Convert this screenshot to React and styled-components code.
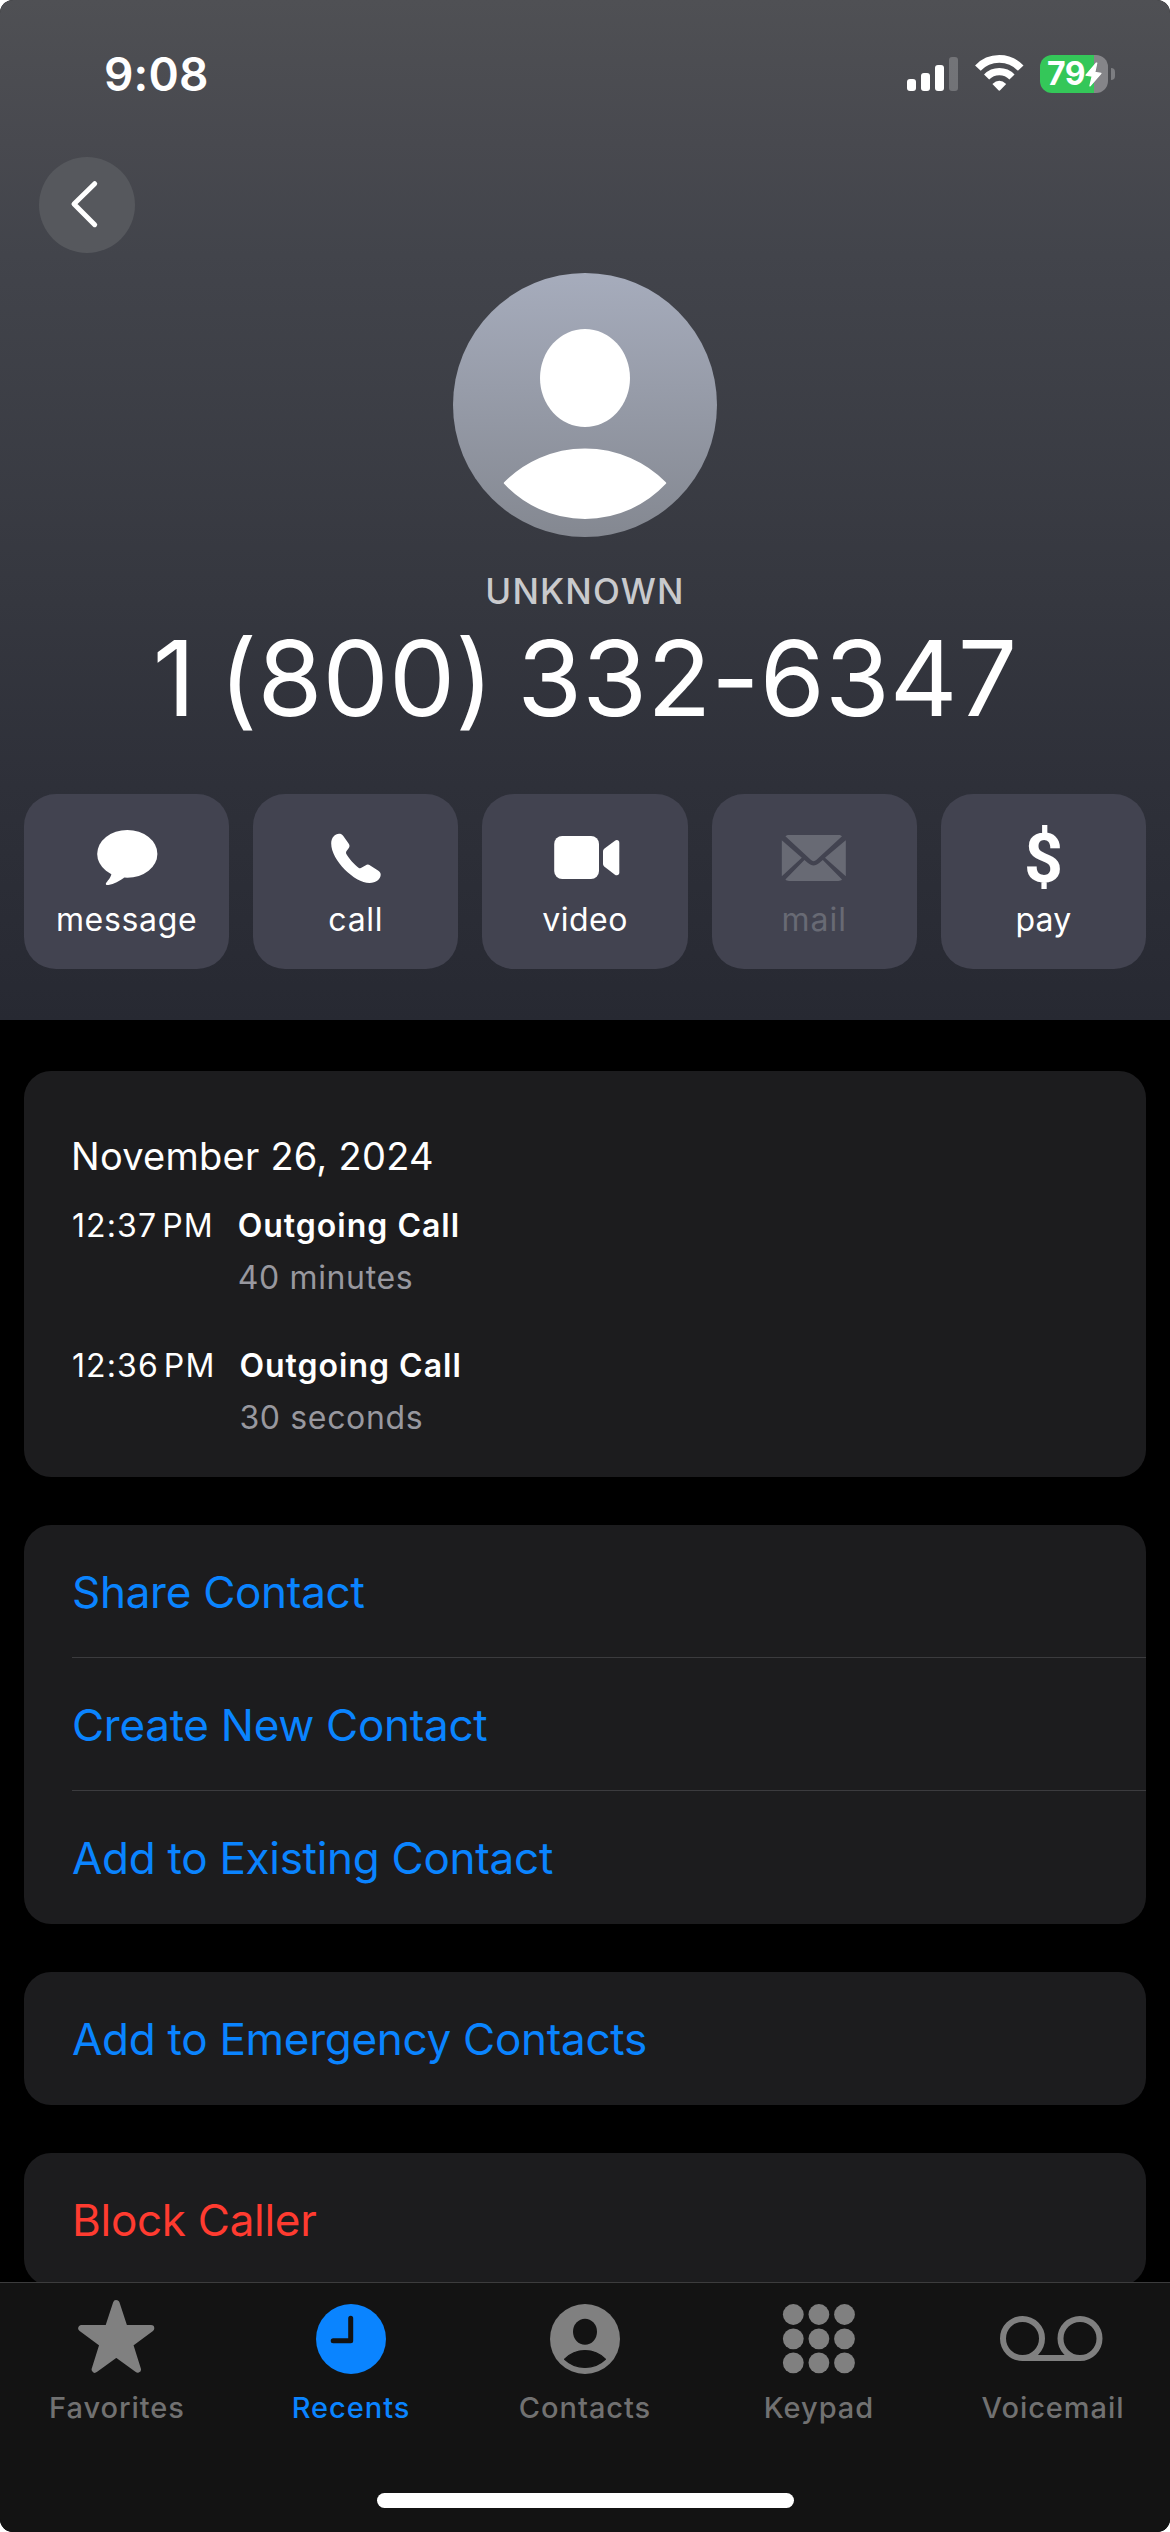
import styled, { createGlobalStyle } from 'styled-components';

const actions = [
  { label: 'message', Icon: MessageIcon, spacing: '0.66px' },
  { label: 'call', Icon: CallIcon, spacing: '0.7px' },
  { label: 'video', Icon: VideoIcon, spacing: '0.5px' },
  { label: 'mail', Icon: MailIcon, spacing: '1px', disabled: true },
  { label: 'pay', Icon: DollarIcon, spacing: '0.2px' },
];

const calls = [
  { time: '12:37', type: 'Outgoing Call', duration: '40 minutes' },
  { time: '12:36', type: 'Outgoing Call', duration: '30 seconds' },
];

const tabs = [
  { label: 'Favorites', Icon: StarIcon },
  { label: 'Recents', Icon: ClockIcon, active: true },
  { label: 'Contacts', Icon: PersonIcon },
  { label: 'Keypad', Icon: KeypadIcon },
  { label: 'Voicemail', Icon: VoicemailIcon },
];

export default function App() {
  return (
    <>
      <GlobalStyle />
      <StyledScreen>
        <StyledHeader>
          <StyledStatusBar>
            <StyledClock>9:08</StyledClock>
            <StyledStatusIcons>
              <SignalIcon />
              <WifiIcon />
              <Battery level="79" />
            </StyledStatusIcons>
          </StyledStatusBar>
          <StyledBackButton aria-label="Back">
            <svg width="96" height="96" viewBox="0 0 96 96" fill="none">
              <path
                d="M55.7 26.7L35 47L55.7 67.7"
                stroke="#ffffff"
                strokeWidth="5"
                strokeLinecap="round"
                strokeLinejoin="round"
              />
            </svg>
          </StyledBackButton>
          <StyledProfile>
            <Avatar />
            <StyledCallerTag>UNKNOWN</StyledCallerTag>
            <StyledNumber>1 (800) 332-6347</StyledNumber>
          </StyledProfile>
          <StyledActions>
            {actions.map(({ label, Icon, spacing, disabled }) => (
              <StyledAction key={label} disabled={disabled}>
                <StyledActionIcon>
                  <Icon />
                </StyledActionIcon>
                <StyledActionLabel $spacing={spacing}>{label}</StyledActionLabel>
              </StyledAction>
            ))}
          </StyledActions>
        </StyledHeader>
        <StyledContent>
          <StyledHistory>
            <StyledDate>November 26, 2024</StyledDate>
            {calls.map(({ time, type, duration }) => (
              <StyledCall key={time}>
                <StyledTime>
                  <span>{time}</span>
                  <span>PM</span>
                </StyledTime>
                <div>
                  <StyledCallType>{type}</StyledCallType>
                  <StyledDuration>{duration}</StyledDuration>
                </div>
              </StyledCall>
            ))}
          </StyledHistory>
          <StyledCard>
            <StyledLink>Share Contact</StyledLink>
            <StyledLink>Create New Contact</StyledLink>
            <StyledLink>Add to Existing Contact</StyledLink>
          </StyledCard>
          <StyledCard>
            <StyledLink>Add to Emergency Contacts</StyledLink>
          </StyledCard>
          <StyledCard>
            <StyledLink $danger>Block Caller</StyledLink>
          </StyledCard>
        </StyledContent>
        <StyledTabBar>
          <StyledTabs>
            {tabs.map(({ label, Icon, active }) => (
              <StyledTab key={label} $active={active}>
                <Icon />
                <StyledTabLabel $active={active}>{label}</StyledTabLabel>
              </StyledTab>
            ))}
          </StyledTabs>
          <StyledHomeIndicator />
        </StyledTabBar>
      </StyledScreen>
    </>
  );
}

function SignalIcon() {
  return (
    <svg width="51" height="34" viewBox="0 0 51 34" fill="#ffffff">
      <rect x="0" y="22" width="9" height="12" rx="3" />
      <rect x="14" y="16" width="9" height="18" rx="3" />
      <rect x="28" y="8" width="9" height="26" rx="3" />
      <rect x="42" y="0" width="9" height="34" rx="3" opacity="0.22" />
    </svg>
  );
}

function WifiIcon() {
  return (
    <StyledWifi width="49" height="36" viewBox="0 0 49 36" fill="none">
      <path d="M2.9 13.1A29.6 29.6 0 0 1 45.7 13.1" stroke="#ffffff" strokeWidth="7.8" />
      <path d="M11.6 22A17.8 17.8 0 0 1 37 22" stroke="#ffffff" strokeWidth="7.2" />
      <path
        d="M17.4 28.9Q24.3 22.8 31.2 28.9L25.4 35.1Q24.3 36.3 23.2 35.1Z"
        fill="#ffffff"
      />
    </StyledWifi>
  );
}

function Battery({ level }) {
  return (
    <StyledBattery>
      <StyledBatteryBody $level={level}>
        <span>{level}</span>
        <svg width="17" height="25" viewBox="0 0 17 25" fill="#ffffff">
          <path
            d="M11.4 1L1 13.2L7.2 14.2L4.9 24L16 11.4L9.8 10.4L11.8 1Z"
            stroke="#ffffff"
            strokeWidth="1.2"
            strokeLinejoin="round"
          />
        </svg>
      </StyledBatteryBody>
      <StyledBatteryCap />
    </StyledBattery>
  );
}

function Avatar() {
  return (
    <svg width="264" height="264" viewBox="0 0 264 264">
      <defs>
        <linearGradient id="avatar" x1="0" y1="0" x2="0" y2="1">
          <stop offset="0" stopColor="#a6acbc" />
          <stop offset="1" stopColor="#848891" />
        </linearGradient>
      </defs>
      <circle cx="132" cy="132" r="132" fill="url(#avatar)" />
      <ellipse cx="132" cy="105" rx="45" ry="49" fill="#ffffff" />
      <path
        d="M52 210A112.5 112.5 0 0 1 212 210A109.5 109.5 0 0 1 52 210Z"
        fill="#ffffff"
        stroke="#ffffff"
        strokeWidth="2.4"
        strokeLinejoin="round"
      />
    </svg>
  );
}

function MessageIcon() {
  return (
    <svg width="80" height="64" viewBox="0 0 80 64" fill="currentColor">
      <ellipse cx="40.3" cy="28.9" rx="30.1" ry="23.9" />
      <path d="M24.6 47C24.8 51.5 21 55.4 19.4 57.5C18 59.4 19.2 60.3 21.5 60C27 59.1 32.5 55.6 37.5 52.4Z" />
    </svg>
  );
}

function CallIcon() {
  return (
    <svg width="80" height="64" viewBox="0 0 80 64" fill="currentColor">
      <path d="M15.2 18.5C15.2 12.5 19 8.7 23 8.7C24.8 8.7 26.2 9.3 27.3 10.9L32.6 18.6C33.8 20.4 33.8 21.6 32.8 23L30.6 26C29.8 27.2 29.9 28.2 30.5 29.3C32.5 33.2 38.8 40 42.5 42.7C43.7 43.5 44.6 43.5 45.8 42.6L49.4 40.4C51.3 39.3 52.6 39.4 54.2 40.5L62 45.6C64 47 64.7 48 64.7 49.7C64.7 54 60 58 53.5 58C38.5 58 15.2 35 15.2 18.5Z" />
    </svg>
  );
}

function VideoIcon() {
  return (
    <svg width="80" height="64" viewBox="0 0 80 64" fill="currentColor">
      <rect x="9.2" y="11" width="44.8" height="43" rx="8" />
      <path d="M58 26.8C58 25.4 58.4 24.5 59.5 23.5L69.6 15.9C71.8 14.3 74.3 15 74.3 17.8V47.6C74.3 50.4 71.8 51.1 69.6 49.5L59.5 41.8C58.4 40.9 58 40 58 38.6Z" />
    </svg>
  );
}

function MailIcon() {
  return (
    <svg width="80" height="64" viewBox="0 0 80 64" fill="currentColor">
      <path d="M11.4 11.2C12.4 10.3 13.5 10 15 10H64.4C66 10 67 10.3 68 11.2L42.5 34.8C40.6 36.6 38.6 36.6 36.8 34.8Z" />
      <path d="M7.8 15.2L27.8 32.7L7.8 51.3Z" />
      <path d="M71.8 15.2L51 32.7L71.8 51.3Z" />
      <path d="M30.4 35L34 38C37.8 41.3 41.4 41.3 45.2 38L48.8 35L68 54.6C67 55.6 66 56 64.4 56H15C13.5 56 12.4 55.6 11.4 54.6Z" />
    </svg>
  );
}

function DollarIcon() {
  return <StyledDollar>$</StyledDollar>;
}

function StarIcon() {
  return (
    <svg width="110" height="76" viewBox="0 0 110 76" fill="currentColor">
      <path
        d="M54.3 3.4L62.5 28.3H89L67.7 44L75.7 69.4L54.3 53.9L32.9 69.4L40.9 44L19.6 28.3H46.1Z"
        stroke="currentColor"
        strokeWidth="6.6"
        strokeLinejoin="round"
      />
    </svg>
  );
}

function ClockIcon() {
  return (
    <svg width="110" height="76" viewBox="0 0 110 76" fill="none">
      <circle cx="55" cy="39" r="35" fill="currentColor" />
      <path
        d="M54.7 18.2V40.7H37.2"
        stroke="#131313"
        strokeWidth="5"
        strokeLinecap="round"
        strokeLinejoin="round"
      />
    </svg>
  );
}

function PersonIcon() {
  return (
    <svg width="110" height="76" viewBox="0 0 110 76">
      <circle cx="55" cy="39" r="35" fill="currentColor" />
      <ellipse cx="55" cy="31.7" rx="12" ry="13" fill="#131313" />
      <path
        d="M34.6 59.2A28.5 28.5 0 0 1 75.4 59.2A29.5 29.5 0 0 1 34.6 59.2Z"
        fill="#131313"
        stroke="#131313"
        strokeWidth="1.2"
        strokeLinejoin="round"
      />
    </svg>
  );
}

function KeypadIcon() {
  return (
    <svg width="110" height="76" viewBox="0 0 110 76" fill="currentColor">
      {[14.5, 38.8, 62.8].map((y) =>
        [29.3, 54.9, 80.5].map((x) => <circle key={`${x}-${y}`} cx={x} cy={y} r="10.4" />)
      )}
    </svg>
  );
}

function VoicemailIcon() {
  return (
    <svg
      width="110"
      height="76"
      viewBox="0 0 110 76"
      fill="none"
      stroke="currentColor"
      strokeWidth="6"
    >
      <circle cx="24.5" cy="38.5" r="19.5" />
      <circle cx="82" cy="38.5" r="19.5" />
      <path d="M24.5 58H82" />
    </svg>
  );
}

const GlobalStyle = createGlobalStyle`
  body {
    margin: 0;
    background: #ffffff;
  }
  * {
    box-sizing: border-box;
  }
  svg {
    display: block;
    flex-shrink: 0;
  }
`;

const StyledScreen = styled.main`
  display: flex;
  flex-direction: column;
  width: 1170px;
  height: 2532px;
  overflow: hidden;
  border-radius: 13px;
  background: #000000;
  color: #ffffff;
  font-family: 'Inter', sans-serif;
`;

const StyledHeader = styled.header`
  flex-shrink: 0;
  height: 1020px;
  background: linear-gradient(
    #4f5054 0%,
    #48494f 14%,
    #42444b 25%,
    #35373f 59%,
    #2e3039 77%,
    #272932 100%
  );
`;

const StyledStatusBar = styled.div`
  display: flex;
  justify-content: space-between;
  align-items: center;
  height: 148px;
  padding: 0 55px 0 104px;
`;

const StyledClock = styled.div`
  font-weight: 600;
  font-size: 46px;
  line-height: 56px;
  letter-spacing: 0.2px;
`;

const StyledStatusIcons = styled.div`
  display: flex;
  align-items: center;
`;

const StyledWifi = styled.svg`
  margin: 0 16px 2px 17px;
`;

const StyledBattery = styled.div`
  display: flex;
  align-items: center;
  gap: 3px;
`;

const StyledBatteryBody = styled.div`
  display: flex;
  align-items: center;
  width: 68px;
  height: 38px;
  padding-left: 7px;
  border-radius: 12px;
  background: linear-gradient(
    90deg,
    #34c759 ${({ $level }) => $level}%,
    #858589 ${({ $level }) => $level}%
  );
  font-weight: 700;
  font-size: 32px;
  line-height: 38px;
  letter-spacing: -0.5px;
`;

const StyledBatteryCap = styled.div`
  width: 4px;
  height: 12px;
  border-radius: 0 6px 6px 0;
  background: #7c7d81;
`;

const StyledBackButton = styled.button`
  display: block;
  width: 96px;
  height: 96px;
  margin: 9px 0 0 39px;
  padding: 0;
  border: none;
  border-radius: 50%;
  background: #56585d;
`;

const StyledProfile = styled.section`
  display: flex;
  flex-direction: column;
  align-items: center;
  margin-top: 20px;
`;

const StyledCallerTag = styled.div`
  margin-top: 32px;
  font-weight: 500;
  font-size: 35px;
  line-height: 44px;
  letter-spacing: 1.2px;
  color: #c9cacd;
`;

const StyledNumber = styled.h1`
  margin: 5px 0 0;
  font-weight: 400;
  font-size: 105px;
  line-height: 120px;
  letter-spacing: 0.1px;
  word-spacing: -6px;
`;

const StyledActions = styled.div`
  display: grid;
  grid-template-columns: repeat(5, 1fr);
  gap: 24px;
  margin-top: 56px;
  padding: 0 24px;
`;

const StyledAction = styled.button`
  display: flex;
  flex-direction: column;
  align-items: center;
  height: 175px;
  padding: 31px 0 0;
  border: none;
  border-radius: 32px;
  background: #424350;
  font-family: inherit;
  color: #ffffff;
  &:disabled {
    color: #686a74;
  }
`;

const StyledActionIcon = styled.div`
  height: 64px;
`;

const StyledDollar = styled.span`
  display: block;
  padding-top: 2px;
  font-family: 'Roboto', sans-serif;
  font-weight: 700;
  font-size: 68px;
  line-height: 64px;
`;

const StyledActionLabel = styled.span`
  margin-top: 12px;
  font-size: 32px;
  line-height: 38px;
  letter-spacing: ${({ $spacing }) => $spacing};
`;

const StyledContent = styled.div`
  display: flex;
  flex-direction: column;
  flex: 1;
  gap: 48px;
  min-height: 0;
  padding: 51px 24px 0;
  overflow: hidden;
`;

const StyledCard = styled.section`
  flex-shrink: 0;
  padding-left: 48px;
  border-radius: 27px;
  background: #1c1c1e;
`;

const StyledHistory = styled(StyledCard)`
  height: 406px;
  padding-top: 63px;
`;

const StyledDate = styled.h2`
  margin: 0 0 28px -1px;
  font-weight: 400;
  font-size: 38px;
  line-height: 44px;
  letter-spacing: 0.25px;
`;

const StyledCall = styled.div`
  display: flex;
  gap: 24px;
  margin-bottom: 48px;
  font-size: 32px;
  line-height: 40px;
`;

const StyledTime = styled.div`
  display: flex;
  gap: 5px;
  letter-spacing: 1.1px;
`;

const StyledCallType = styled.div`
  font-weight: 600;
  letter-spacing: 1px;
`;

const StyledDuration = styled.div`
  margin-top: 12px;
  letter-spacing: 0.65px;
  color: #98989f;
`;

const StyledLink = styled.div`
  height: 133px;
  padding-top: 2px;
  font-size: 44px;
  line-height: 131px;
  letter-spacing: -0.28px;
  color: ${({ $danger }) => ($danger ? '#ff3b30' : '#0a84ff')};
  &:not(:last-child) {
    border-bottom: 1px solid #3b3b3e;
  }
`;

const StyledTabBar = styled.nav`
  display: flex;
  flex-direction: column;
  flex-shrink: 0;
  justify-content: space-between;
  align-items: center;
  height: 250px;
  padding: 17px 0 24px;
  border-top: 1px solid #3c3c3d;
  background: #131313;
`;

const StyledTabs = styled.div`
  display: grid;
  grid-template-columns: repeat(5, 1fr);
  width: 100%;
`;

const StyledTab = styled.div`
  display: flex;
  flex-direction: column;
  align-items: center;
  color: ${({ $active }) => ($active ? '#0a84ff' : '#808080')};
`;

const StyledTabLabel = styled.span`
  margin-top: 14px;
  font-weight: 500;
  font-size: 29px;
  line-height: 36px;
  letter-spacing: 0.95px;
  color: ${({ $active }) => ($active ? '#0a84ff' : '#717171')};
`;

const StyledHomeIndicator = styled.div`
  width: 417px;
  height: 15px;
  border-radius: 8px;
  background: #ffffff;
`;
